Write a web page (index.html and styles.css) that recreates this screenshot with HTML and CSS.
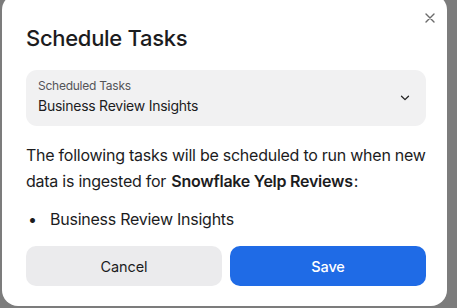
FILE: index.html
```html
<!DOCTYPE html>
<html lang="en">
<head>
    <meta charset="UTF-8">
    <title>Schedule Tasks</title>
    <link rel="stylesheet" href="styles.css">
</head>
<body>
    <div class="modal">
        <button class="close-btn" type="button" aria-label="Close">
            <svg width="10" height="10" viewBox="0 0 10 10">
                <path d="M1 1 L9 9 M9 1 L1 9" stroke="#6b6b6b" stroke-width="1.4" stroke-linecap="round"/>
            </svg>
        </button>
        <h1 class="modal-title">Schedule Tasks</h1>
        <div class="select-box">
            <div class="select-text">
                <span class="select-label">Scheduled Tasks</span>
                <span class="select-value">Business Review Insights</span>
            </div>
            <svg class="chevron" width="10" height="6" viewBox="0 0 10 6">
                <path d="M1.5 1.2 L5 4.6 L8.5 1.2" fill="none" stroke="#222" stroke-width="1.3" stroke-linecap="round" stroke-linejoin="round"/>
            </svg>
        </div>
        <p class="desc">The following tasks will be scheduled to run when new data is ingested for <strong>Snowflake Yelp Reviews</strong>:</p>
        <ul class="task-list">
            <li>Business Review Insights</li>
        </ul>
        <div class="actions">
            <button class="btn btn-cancel" type="button">Cancel</button>
            <button class="btn btn-save" type="button">Save</button>
        </div>
    </div>
</body>
</html>
```

FILE: styles.css
```css
* {
    box-sizing: border-box;
    margin: 0;
    padding: 0;
}
body {
    background: #7c7c7c;
    font-family: Inter, "Noto Sans", sans-serif;
    color: #1c1c1e;
    letter-spacing: -0.25px;
    overflow: hidden;
}
.modal {
    position: relative;
    margin: -6px 0 0 2px;
    width: 445px;
    height: 312px;
    background: #fff;
    border-radius: 16px;
    padding: 30px 21px 0 24px;
}
.close-btn {
    position: absolute;
    top: 19px;
    right: 12px;
    border: none;
    background: none;
    width: 10px;
    height: 10px;
    display: flex;
}
.modal-title {
    font-size: 22px;
    font-weight: 500;
    line-height: 28px;
    letter-spacing: -0.3px;
    margin-bottom: 18px;
}
.select-box {
    display: flex;
    align-items: center;
    justify-content: space-between;
    background: #f1f1f2;
    border-radius: 11px;
    height: 56px;
    padding: 0 16px 3px 12px;
}
.select-text {
    display: flex;
    flex-direction: column;
    gap: 2px;
}
.select-label {
    font-size: 12px;
    line-height: 16px;
    color: #545458;
}
.select-value {
    font-size: 14px;
    line-height: 20px;
    color: #1c1c1e;
}
.chevron {
    margin-top: 2px;
}
.desc {
    margin-top: 16px;
    font-size: 16px;
    line-height: 26px;
}
.desc strong {
    font-weight: 600;
    margin: 0 1px;
}
.task-list {
    margin-top: 14px;
    list-style: none;
    font-size: 16px;
    line-height: 22px;
}
.task-list li::before {
    content: "\2022";
    display: inline-block;
    width: 22px;
    padding-left: 2px;
}
.actions {
    display: flex;
    gap: 8px;
    margin-top: 16px;
}
.btn {
    flex: 1;
    height: 40px;
    border: none;
    border-radius: 10px;
    font-family: Inter, "Noto Sans", sans-serif;
    font-size: 14.5px;
    letter-spacing: -0.1px;
}
.btn-cancel {
    background: #ebebed;
    color: #1c1c1e;
    font-weight: 400;
}
.btn-save {
    background: #1f6be6;
    color: #fff;
    font-weight: 500;
}
```
